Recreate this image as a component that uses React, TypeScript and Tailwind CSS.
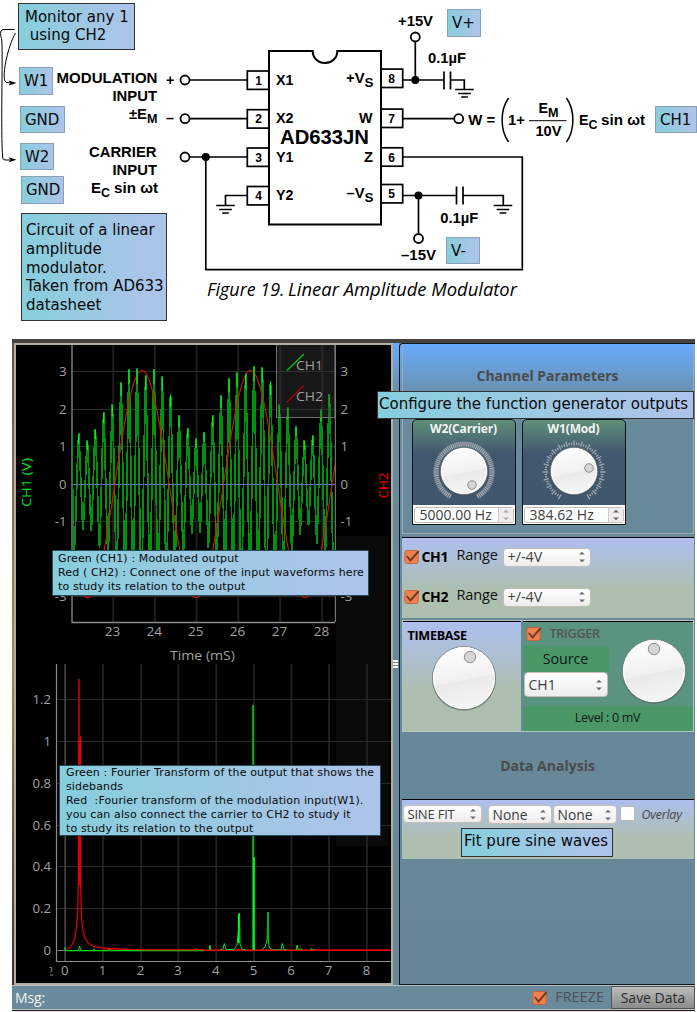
import React from "react";

const UI = "font-['Open_Sans','Noto_Sans',sans-serif]";

type TextProps = {
  x: number;
  y: number;
  w?: number;
  s?: number;
  a?: "start" | "middle" | "end";
  fill?: string;
  children: string;
};

/* Bold schematic lettering */
function B({ x, y, w, s = 14.3, a = "start", children }: TextProps) {
  return (
    <text x={x} y={y} fontSize={s} textAnchor={a} textLength={w} lengthAdjust="spacingAndGlyphs" fontWeight={700} fontFamily="Liberation Sans, sans-serif">
      {children}
    </text>
  );
}

/* Axis lettering */
function L({ x, y, w, s = 13.2, a = "middle", fill = "#a0a0a0", children }: TextProps) {
  return (
    <text x={x} y={y} fontSize={s} textAnchor={a} fill={fill} textLength={w} lengthAdjust="spacingAndGlyphs" fontFamily="Open Sans, Noto Sans, sans-serif">
      {children}
    </text>
  );
}

function Ground({ x, y }: { x: number; y: number }) {
  return <path d={`M${x - 9.3} ${y}h18.6M${x - 6.3} ${y + 4}h12.6M${x - 3.3} ${y + 7.5}h6.6`} />;
}

function Schematic() {
  const left = [80, 118.7, 157, 195.5];
  const right = [78.3, 118.3, 157, 193.7];
  return (
    <svg width="697" height="339" viewBox="0 0 697 339" className="block shrink-0">
      <g fill="none" stroke="#000" strokeWidth="1.7">
        <path strokeWidth="2" d="M313 51H269V224.5H381V51H337.3" />
        <path strokeWidth="2" d="M312.7 50V52C313 58 318 63 325 63S337 58 337.3 52V50" />
        {left.map((y) => <rect key={y} x="247.3" y={y - 9} width="21.5" height="18.4" />)}
        {right.map((y) => <rect key={y} x="381" y={y - 9.2} width="21.7" height="18.4" />)}
        <path d="M190 80H247M190 118.7H247M190 157H247M205.8 157V269.6H522.3V157H403" />
        <path d="M247 195.5H225.5V205.5M403 80H444M415.3 80V42M451 80H464.3V89.5M403 118.7H454M403 195.5H456.5M418.5 195.5V233.5M463 195.5H503.3V205.5" />
        <path d="M444 71.5V89.5M450.5 71.5V89.5M456.5 186.5V204.5M463 186.5V204.5" />
        <Ground x={225.5} y={205.5} />
        <Ground x={464.5} y={89.5} />
        <Ground x={503} y={205.5} />
        <g strokeWidth="1.8">
          <circle cx="185" cy="80" r="4.5" />
          <circle cx="185" cy="118.7" r="4.5" />
          <circle cx="185" cy="157" r="4.5" />
          <circle cx="415.3" cy="37" r="4.5" />
          <circle cx="418.5" cy="238.5" r="4.5" />
          <circle cx="458.7" cy="118.7" r="4.5" />
        </g>
        <path strokeWidth="1.5" d="M508.5 98C500 110 500 130 508.5 142M566.5 98C575 110 575 130 566.5 142" />
        <path strokeWidth="1" d="M529 120.7H566.5" />
      </g>
      <circle cx="205.8" cy="157" r="4" />
      <circle cx="415.3" cy="80" r="4" />
      <circle cx="418.5" cy="195.5" r="4" />

      <B x={56.5} y={83} w={101}>MODULATION</B>
      <B x={112.5} y={101} w={44.5}>INPUT</B>
      <B x={129} y={118.7} w={18} s={14}>±E</B>
      <B x={147} y={123} w={10.5} s={12.5}>M</B>
      <B x={89} y={157} w={67.5}>CARRIER</B>
      <B x={112.5} y={175} w={44.5}>INPUT</B>
      <B x={91} y={193} w={10} s={14}>E</B>
      <B x={101} y={197} w={9} s={12.5}>C</B>
      <B x={114} y={193} w={44} s={14}>sin ωt</B>
      <B x={166} y={85}>+</B>
      <B x={166} y={123}>–</B>

      {["1", "2", "3", "4"].map((n, i) => <B key={n} x={258.6} y={[85, 123.3, 162, 200][i]} s={12} a="middle">{n}</B>)}
      {["8", "7", "6", "5"].map((n, i) => <B key={n} x={391.6} y={[83, 123, 162, 198.3][i]} s={12} a="middle">{n}</B>)}
      {["X1", "X2", "Y1", "Y2"].map((n, i) => <B key={n} x={276} y={[85, 123, 162, 200][i]} w={17.5}>{n}</B>)}
      <B x={280} y={144} w={89} s={19.3}>AD633JN</B>
      <B x={346} y={83.3} w={18.5} s={14}>+V</B>
      <B x={364.5} y={87} w={9} s={13}>S</B>
      <B x={359} y={122.6} w={13.5}>W</B>
      <B x={364} y={161.7} w={9}>Z</B>
      <B x={346.5} y={198.3} w={18} s={14}>–V</B>
      <B x={364.5} y={202} w={9} s={13}>S</B>

      <B x={398} y={26} w={35}>+15V</B>
      <B x={428} y={63} w={38}>0.1µF</B>
      <B x={440.3} y={223.3} w={38}>0.1µF</B>
      <B x={401} y={260} w={35}>–15V</B>
      <B x={468.3} y={125} w={27}>W =</B>
      <B x={508} y={125} w={17}>1+</B>
      <B x={538.5} y={113.3} w={9.5} s={14}>E</B>
      <B x={548} y={117} w={10.5} s={12.5}>M</B>
      <B x={535.5} y={136} w={26}>10V</B>
      <B x={579} y={125} w={9.5} s={14}>E</B>
      <B x={588.5} y={129} w={9} s={12.5}>C</B>
      <B x={601} y={125} w={44} s={14}>sin ωt</B>
      <g fontSize="18.3" fontStyle="italic" fontFamily="Open Sans, Noto Sans, sans-serif">
        <text x="207" y="295.5" textLength="77.5" lengthAdjust="spacingAndGlyphs">Figure 19.</text>
        <text x="288" y="295.5" textLength="229" lengthAdjust="spacingAndGlyphs">Linear Amplitude Modulator</text>
      </g>

      <g fill="none" stroke="#000" strokeWidth="1">
        <path d="M14.500 29.500H3C-0.500 30 0.500 36 1.800 40C3 60 0.500 130 2.700 158Q3 160.300 6 160H10" />
        <path d="M15.500 33C8 46 2 74 5 81Q6 83.500 10 82.800" />
      </g>
      <path d="M16.500 83L8.500 80.500L10.500 83L8.500 85.500ZM16.500 159.800L8.500 157.300L10.500 159.800L8.500 162.300Z" />
    </svg>
  );
}

const peaks = [
  [78.7, 1.35], [87.3, 1.17], [95.3, 1.48], [103.7, 1.93], [112.3, 2.13], [121, 2.72], [129, 3.07], [137, 3.08],
  [145.7, 2.9], [154, 3.07], [162.2, 2.87], [170.5, 2.4], [179, 1.83], [187.7, 1.5], [196, 1.22], [204.1, 1.4],
  [212.7, 1.83], [221, 2.37], [229, 2.83], [237, 2.98], [245.7, 2.95], [254, 3.15], [262.3, 3.12], [270.5, 2.75],
  [279.3, 2.12], [287.7, 2.05], [296, 1.55], [304.3, 1.17], [312.7, 1.3], [321, 2.0], [329.3, 2.4],
];
const troughs = [
  -1.22, -1.25, -1.7, -2, -2.4, -2.7, -2.9, -2.9, -2.9, -2.9, -2.7, -2.3, -1.9, -1.32, -1.3, -1.7,
  -2.1, -2.5, -2.7, -2.9, -2.9, -2.9, -2.9, -2.7, -2.3, -1.9, -1.35, -1.12, -1.6, -2.1, -2.5,
];
const Y0 = 484.2;
const U = 37.6;

function carrierPath() {
  const pts: [number, number][] = [[72, 0.1], [74.3, -1.8]];
  peaks.forEach(([x, v], i) => {
    pts.push([x, v]);
    const next = peaks[i + 1] ? peaks[i + 1][0] : 338;
    pts.push([(x + next) / 2, troughs[i]]);
  });
  let d = "M72.500 435V484";
  for (let i = 1; i < pts.length - 1; i++) {
    const [xa, va] = pts[i];
    const [xb, vb] = pts[i + 1];
    for (let k = 0; k <= 6; k++) {
      const t = k / 6;
      const e = 0.6 * t + 0.4 * ((1 - Math.cos(Math.PI * t)) / 2);
      d += `L${(xa + (xb - xa) * t).toFixed(1)} ${(Y0 - U * (va + (vb - va) * e)).toFixed(1)}`;
    }
  }
  return d;
}

function modPath() {
  let d = "";
  for (let x = 72; x <= 335; x += 1) {
    const y = Y0 - 3.02 * U * Math.cos((2 * Math.PI * (x - 142)) / 108.6);
    d += `${d ? "L" : "M"}${x} ${y.toFixed(1)}`;
  }
  return d;
}

function TimePlot() {
  const vx = [113.2, 155, 196.5, 238.2, 280.2, 322.2];
  const hy: [number, string][] = [[371.5, "3"], [409.3, "2"], [446.6, "1"], [484.3, "0"], [521.6, "-1"], [596.5, "-3"]];
  return (
    <svg width="375" height="319" viewBox="16 345 375 319" className="block">
      <defs>
        <clipPath id="timeArea"><rect x="71" y="345" width="264" height="277" /></clipPath>
      </defs>
      <rect x="336" y="536" width="53" height="128" fill="#0a0a0a" />
      <g stroke="#1d1d1d" strokeWidth="2">
        {vx.map((x) => <path key={x} d={`M${x} 345V622`} />)}
      </g>
      <g stroke="#2c2c2c" strokeWidth="1">
        {hy.map(([y]) => <path key={y} d={`M72 ${Math.floor(y) + 0.5}H335`} />)}
      </g>
      <path d="M72 345V622.500H335" fill="none" stroke="#8c8c8c" strokeWidth="1.300" />
      <g clipPath="url(#timeArea)" fill="none">
        <path d={carrierPath()} stroke="#00920e" strokeWidth="1.800" shapeRendering="crispEdges" />
        <path d={modPath()} stroke="#c81800" strokeWidth="1.200" />
        <g stroke="#00f51c" strokeWidth="1.300">
          {peaks.map(([x, v]) => <path key={x} d={`M${x} ${Y0 - U * v + 1}v${5 + v * 3}`} />)}
        </g>
      </g>
      <path d="M72 484.500H335" stroke="#6673a6" strokeWidth="1" />
      <rect x="276.500" y="340" width="58.500" height="77.500" fill="#3a3a3a" fillOpacity="0.400" stroke="#6e6e6e" />
      <path d="M335.300 345V622" stroke="#8c8c8c" />
      <path d="M287 370.500L304 354" stroke="#00c820" strokeWidth="1.200" />
      <path d="M287 402L304 385.500" stroke="#b00000" strokeWidth="1.200" />
      <L x={296} y={370} w={27} a="start">CH1</L>
      <L x={296} y={401} w={27} a="start">CH2</L>
      {hy.map(([y, t]) => (
        <g key={t}>
          <L x={66.5} y={y + 4.7} a="end">{t}</L>
          <L x={340.5} y={y + 4.7} a="start">{t}</L>
        </g>
      ))}
      {["23", "24", "25", "26", "27", "28"].map((t, i) => <L key={t} x={vx[i] - 0.7} y={636} w={15.5}>{t}</L>)}
      <L x={202.5} y={660} w={65}>Time (mS)</L>
      <g transform="translate(30.500 482.500) rotate(-90)"><L x={0} y={0} w={49} fill="#00e020">CH1 (V)</L></g>
      <g transform="translate(388 485.500) rotate(-90)"><L x={0} y={0} w={26} fill="#ff0000">CH2</L></g>
    </svg>
  );
}

function SpectrumPlot() {
  const hy: [number, string][] = [[699.5, "1.2"], [741.5, "1"], [783.5, "0.8"], [825.5, "0.6"], [866.5, "0.4"], [908.5, "0.2"], [950.5, "0"]];
  const vx = [65.2, 103, 141, 178.3, 216.3, 254, 291.5, 329, 367];
  return (
    <svg width="375" height="318" viewBox="16 664 375 318" className="block">
      <rect x="336" y="664" width="53" height="182" fill="#0a0a0a" />
      <g stroke="#222" strokeWidth="1.800">
        {vx.map((x) => <path key={x} d={`M${x} 664V961`} />)}
      </g>
      <g stroke="#292929">
        {hy.map(([y]) => <path key={y} d={`M56 ${y}H391`} />)}
      </g>
      <path d="M65.200 664V961" stroke="#444" strokeWidth="1.500" />
      <path d="M56.500 664V961.500H391" fill="none" stroke="#8c8c8c" strokeWidth="1.200" />
      <path d="M56.500 950.500H65" stroke="#777" />
      <path fill="none" stroke="#d80000" strokeWidth="1.300" d="M65 950L70 947.500L73 943L75 937L76.500 927L77.700 912L78.400 877L79 679V760L79.700 780L80.500 736V877L81.300 915L82.500 927L84.500 937L88 943L94 946.500L103 948L120 949L140 950H391" />
      <path stroke="#e80000" strokeWidth="2.200" d="M79.800 740V885" />
      <path stroke="#b00000" strokeWidth="1.500" d="M79.200 679V740" />
      <path fill="none" stroke="#00e820" d="M65 947V950.500H78.500L79.500 946L81 950.500H93L94 949L95 950.500H107L109 949.500L112 950.500H195L196 948.500V950.500H209L210 945L211 950.500H219L223 949L224.300 943.500L226 949.500L234 949.500L237 945L238.500 930V914L239.500 913L240 944L242 949L247 950.500H253V705" />
      <path fill="none" stroke="#00e820" d="M254.500 950.500H261L265 947L267 940L267.500 925L268.300 912V942L269.500 948L273 950L281 950L282.300 943.500L284 949.500L290 950.500H296L297 945L298.500 950.500L301 948.500L303 950.500H310L311.500 948.500L313 950.500L315 949.500" />
      <path stroke="#00b018" strokeWidth="1.600" d="M253.200 705V950M268 912V940" />
      <path stroke="#00ff20" strokeWidth="1.600" d="M254 857V950M238.700 915V943" />
      <path stroke="#e80000" d="M141 950.500H391" />
      <path stroke="#00d020" d="M66 950.800H204" />
      <path stroke="#d80000" d="M103 949H120M120 949.500H205" />
      {hy.map(([y, t]) => <L key={t} x={51} y={y + 4.7} a="end">{t}</L>)}
      {vx.map((x, i) => <L key={x} x={x - 0.5} y={975}>{String(i)}</L>)}
      <path d="M49.500 967.500Q52 966.500 52 969Q52 971 50.300 972.500M50 975H53" stroke="#8a8a8a" fill="none" />
    </svg>
  );
}

function Knob({ size, dx, dy, dot }: { size: number; dx: number; dy: number; dot: number }) {
  const r = size / 2;
  return (
    <svg width={size + 4} height={size + 4} viewBox={`${-r - 2} ${-r - 2} ${size + 4} ${size + 4}`} className="block">
      <defs>
        <linearGradient id={`knob${size}`} x1="0" y1="0" x2="0.200" y2="1">
          <stop offset="0" stopColor="#fff" />
          <stop offset="0.600" stopColor="#f1f1f1" />
          <stop offset="0.620" stopColor="#eaeaea" />
          <stop offset="1" stopColor="#f4f4f4" />
        </linearGradient>
      </defs>
      <circle cy="0.800" r={r} fill="#3d4a50" fillOpacity="0.500" />
      <circle r={r - 0.5} fill={`url(#knob${size})`} stroke="#737b7e" strokeWidth="0.800" />
      <circle r={r - 1.5} fill="none" stroke="#fff" strokeWidth="1" />
      <circle cx={dx} cy={dy} r={dot} fill="#d6d6d6" stroke="#8e8e8e" />
    </svg>
  );
}

function Ticks({ step, dense }: { step: number; dense: boolean }) {
  const out: string[] = [];
  for (let a = 120, i = 0; a <= 420; a += step, i++) {
    const t = (a * Math.PI) / 180;
    const r1 = dense ? 25.5 : i % 3 ? 27 : 26;
    const r2 = dense ? 30.5 : i % 3 ? 29.5 : 31.5;
    out.push(`M${(r1 * Math.cos(t)).toFixed(1)} ${(r1 * Math.sin(t)).toFixed(1)}L${(r2 * Math.cos(t)).toFixed(1)} ${(r2 * Math.sin(t)).toFixed(1)}`);
  }
  return (
    <svg width="66" height="66" viewBox="-33 -33 66 66" className="absolute left-1/2 top-[19px] -translate-x-1/2">
      <path d={out.join("")} stroke="#a4a9ae" strokeWidth="1.300" />
    </svg>
  );
}

function Arrows({ dim }: { dim?: boolean }) {
  return (
    <svg width="8" height="12" viewBox="0 0 8 12" className="block shrink-0">
      <path d="M1.200 3.500L4 0.800L6.800 3.500Z" fill={dim ? "#aaa" : "#666"} />
      <path d="M1.200 8.500L4 11.200L6.800 8.500Z" fill={dim ? "#aaa" : "#666"} />
    </svg>
  );
}

function Spin({ value, dim }: { value: string; dim?: boolean }) {
  return (
    <div className="mt-auto flex h-[19px] w-full items-center bg-[#fdfdfd] px-px">
      <div className="flex h-[16px] w-full items-center rounded-[3px] border border-[#c4bdb8] bg-white pl-[5px]">
        <span className="grow whitespace-nowrap text-[14px] leading-none text-[#404040]">{value}</span>
        <span className="flex h-full w-[15px] items-center justify-center border-l border-[#cfcac6] bg-[#eeedec]"><Arrows dim={dim} /></span>
      </div>
    </div>
  );
}

function Generator({ name, value, dx, dy, dim, dense }: { name: string; value: string; dx: number; dy: number; dim?: boolean; dense: boolean }) {
  return (
    <div className="relative flex h-[106px] w-[104px] flex-col items-center rounded-t-[5px] border-[1.5px] border-[#0c1418] bg-linear-to-b from-[#5f9077] via-[#42586f] via-32% to-[#40566d]">
      <span className="mt-[2px] whitespace-nowrap text-[12px] font-bold leading-[13px] tracking-[-0.15px] text-[#f4f4f4]">{name}</span>
      <Ticks step={dense ? 4 : 5} dense={dense} />
      <div className="mt-[10px]"><Knob size={48} dx={dx} dy={dy} dot={4.3} /></div>
      <Spin value={value} dim={dim} />
    </div>
  );
}

function Check() {
  return (
    <svg width="16" height="16" viewBox="0 0 16 16" className="block shrink-0">
      <rect x="0.800" y="1.500" width="13.400" height="13" rx="2" fill="#f0804e" stroke="#c05a38" strokeWidth="0.800" />
      <path d="M2.800 7L6.500 11.500L14.800 2" fill="none" stroke="#6e3a28" strokeWidth="1.900" />
    </svg>
  );
}

function Combo({ className, text }: { className: string; text: string }) {
  return (
    <div className={"flex shrink-0 items-center justify-between rounded-[4px] border border-[#c9bdb8] bg-linear-to-b from-white to-[#ececec] pr-[4px] text-[#404040] " + className}>
      <span className="whitespace-nowrap leading-none">{text}</span>
      <Arrows />
    </div>
  );
}

function RangeRow({ name }: { name: string }) {
  return (
    <div className="flex h-[20px] items-center">
      <Check />
      <span className="ml-[2px] w-[35px] text-[14px] font-bold leading-none tracking-[-0.3px] text-black">{name}</span>
      <span className="w-[46px] pb-[3px] text-[14.5px] leading-none tracking-[-0.1px] text-[#101010]">Range</span>
      <Combo className="h-[19px] w-[88px] pl-[4px] text-[14.3px]" text="+/-4V" />
    </div>
  );
}

function ControlPanel() {
  return (
    <div className="flex w-[296px] shrink-0 flex-col rounded-tl-[4px] border-b border-l-[1.5px] border-t border-[#101820] bg-linear-to-b from-[#69abff] via-[#688a9b] via-[60px] to-[#678798] px-[1.500px]">
      <section className="flex h-[190px] flex-col items-center border border-t-0 border-[#a2adb0]">
        <h2 className="mt-[23px] whitespace-nowrap text-[13.9px] font-bold leading-[18px] text-[#4b4b4b]">Channel Parameters</h2>
        <div className="mt-[34px] flex w-full gap-[6px] pl-[9px]">
          <Generator name="W2(Carrier)" value="5000.00 Hz" dx={8} dy={14} dim dense />
          <Generator name="W1(Mod)" value="384.62 Hz" dx={15} dy={-3} dense={false} />
        </div>
      </section>
      <section className="mt-[3px] flex h-[81px] flex-col gap-[20px] border-t border-t-black bg-linear-to-b from-[#aebeef] to-[#adbfae] to-65% pl-[2px] pt-[9px]">
        <RangeRow name="CH1" />
        <RangeRow name="CH2" />
      </section>
      <section className="mt-[2px] flex h-[112px] gap-[2px] border border-[#b8c2c0]">
        <div className="flex w-[118px] flex-col border-t border-black bg-linear-to-b from-[#aebeef] to-[#adbfae] to-65%">
          <span className="ml-[5px] mt-[7px] text-[12.6px] font-bold leading-[14px] tracking-[-0.3px] text-black">TIMEBASE</span>
          <div className="ml-[27px] mt-[1px]"><Knob size={64} dx={6} dy={-21} dot={5.7} /></div>
        </div>
        <div className="flex grow flex-col border-t border-black bg-[#5a937f]">
          <div className="flex grow">
            <div className="flex w-[86px] flex-col">
              <div className="flex h-[24px] items-center gap-[8px] pl-[3px] text-[12.6px] text-[#545454]"><Check /><span className="font-semibold leading-none tracking-[-0.3px]">TRIGGER</span></div>
              <div className="flex h-[26px] items-center justify-center bg-[#4a9868] text-[14.3px] leading-none tracking-[-0.1px] text-[#0d1a12]">Source</div>
              <Combo className="ml-px h-[25px] w-[84px] pl-[4px] text-[14px]" text="CH1" />
            </div>
            <div className="ml-[11px] mt-[15px]"><Knob size={64} dx={0} dy={-22} dot={5.7} /></div>
          </div>
          <div className="flex h-[25px] items-center justify-center bg-[#4a9868] text-[12.6px] leading-none tracking-[-0.35px] text-[#0d1a12]">Level : 0 mV</div>
        </div>
      </section>
      <h2 className="mt-[24px] text-center text-[14px] font-bold leading-[20px] text-[#4b4b4b]">Data Analysis</h2>
      <section className="mt-[23px] flex h-[60px] items-start border-t border-black bg-linear-to-b from-[#aebeef] to-[#adbfae] to-65% pl-px pt-[5px] text-[13.8px]">
        <Combo className="h-[18px] w-[79px] pl-[4px] text-[13px] tracking-[-0.2px]" text="SINE FIT" />
        <Combo className="ml-[6px] h-[19px] w-[64px] pl-[4px]" text="None" />
        <Combo className="ml-px h-[19px] w-[64px] pl-[4px]" text="None" />
        <span className="ml-[3px] mt-px h-[15px] w-[15px] shrink-0 rounded-[2px] border border-[#bdb8b4] bg-white" />
        <span className="ml-[7px] mt-[3px] text-[12.4px] italic leading-[14px] tracking-[-0.2px] text-[#454545]">Overlay</span>
      </section>
    </div>
  );
}

function Window() {
  return (
    <div className={"flex h-[673px] w-[697px] pl-[12px] pr-[2px] " + UI}>
      <div className="flex w-full flex-col border-t-[4px] border-[#45433f] bg-[#688a9b]">
        <div className="flex h-[642px]">
          <div className="w-[2px] shrink-0 bg-linear-to-b from-[#6a5248] via-[#a98a4c] to-[#3a3228]" />
          <div className="flex w-[379px] shrink-0 flex-col border-2 border-[#b3ada6] bg-black">
            <TimePlot />
            <SpectrumPlot />
          </div>
          <div className="flex grow flex-col bg-linear-to-b from-[#69abff] via-[#688a9b] via-[60px] to-[#678798] pt-[317px]">
            <div className="flex flex-col gap-px"><i className="h-[2px] w-[5px] bg-white/90" /><i className="h-[2px] w-[5px] bg-white/90" /><i className="h-[2px] w-[5px] bg-white/90" /></div>
          </div>
          <ControlPanel />
        </div>
        <div className="flex h-[25px] items-center border-y border-[#b9bdbb]">
          <span className="ml-[3px] text-[14px] leading-none tracking-[-0.1px] text-[#f2f2f2]">Msg:</span>
          <div className="ml-auto flex items-center gap-[7px] text-[14.3px] leading-none text-[#4c5357]"><Check /><span className="tracking-[0.1px]">FREEZE</span></div>
          <button className="ml-[7px] h-[23px] w-[84px] whitespace-nowrap border border-[#555] bg-linear-to-b from-[#bcbcbc] to-[#8c8c8c] text-[14px] leading-none text-[#2c2c2c]">Save Data</button>
        </div>
        <div className="h-px bg-[#2a2028]" />
        <div className="h-px bg-[#e8dcdc]" />
      </div>
    </div>
  );
}

function Note({ className, children }: { className: string; children: React.ReactNode }) {
  return (
    <div className={"absolute whitespace-pre border bg-linear-to-r from-[#86cedd] to-[#aec3ea] font-['DejaVu_Sans',sans-serif] text-[#0a0a0a] " + className}>
      {children}
    </div>
  );
}

export default function App() {
  return (
    <main className="relative h-[1012px] w-[697px] overflow-hidden bg-white">
      <Schematic />
      <Window />
      <Note className="left-[18px] top-[3px] h-[47px] w-[117px] border-[#333] pl-[6px] pt-[4px] text-[15px] leading-[18px]">{"Monitor any 1\n using CH2"}</Note>
      <Note className="left-[19px] top-[67px] h-[28px] w-[34px] border-[#8aa0b8] pl-[4px] text-[15px] leading-[26px]">W1</Note>
      <Note className="left-[20px] top-[106px] h-[27px] w-[45px] border-[#8aa0b8] pl-[4px] text-[15px] leading-[26px]">GND</Note>
      <Note className="left-[20px] top-[143px] h-[27px] w-[34px] border-[#8aa0b8] pl-[4px] text-[15px] leading-[26px]">W2</Note>
      <Note className="left-[21px] top-[176px] h-[28px] w-[43px] border-[#8aa0b8] pl-[4px] text-[15px] leading-[26px]">GND</Note>
      <Note className="left-[21px] top-[213px] h-[108px] w-[146px] border-[#333] pl-[4px] pt-[7px] text-[15px] leading-[18.8px]">{"Circuit of a linear\namplitude\nmodulator.\nTaken from AD633\ndatasheet"}</Note>
      <Note className="left-[447px] top-[9px] h-[28px] w-[34px] border-[#8aa0b8] pl-[4px] text-[15px] leading-[26px]">V+</Note>
      <Note className="left-[446px] top-[237px] h-[27px] w-[34px] border-[#8aa0b8] pl-[4px] text-[15px] leading-[26px]">V-</Note>
      <Note className="left-[655px] top-[106px] h-[27px] w-[42px] border-[#8aa0b8] pl-[4px] text-[15px] leading-[26px]">CH1</Note>
      <Note className="left-[377px] top-[391px] h-[28px] w-[317px] border-[#333] pl-[1px] text-[15px] leading-[24px]">Configure the function generator outputs</Note>
      <Note className="left-[52px] top-[550px] h-[46px] w-[317px] border-[#2a4a58] pl-[5px] pt-px text-[11px] leading-[14px] tracking-[0.13px]">{"Green (CH1) : Modulated output\nRed ( CH2) : Connect one of the input waveforms here\nto study its relation to the output"}</Note>
      <Note className="left-[59px] top-[765px] h-[71px] w-[322px] border-[#2a4a58] pl-[6px] text-[11px] leading-[14px] tracking-[0.13px]">{"Green : Fourier Transform of the output that shows the\nsidebands\nRed  :Fourier transform of the modulation input(W1).\nyou can also connect the carrier to CH2 to study it\nto study its relation to the output"}</Note>
      <Note className="left-[461px] top-[828px] h-[29px] w-[152px] border-[#333] pl-[2px] text-[15px] leading-[25px]">Fit pure sine waves</Note>
    </main>
  );
}
